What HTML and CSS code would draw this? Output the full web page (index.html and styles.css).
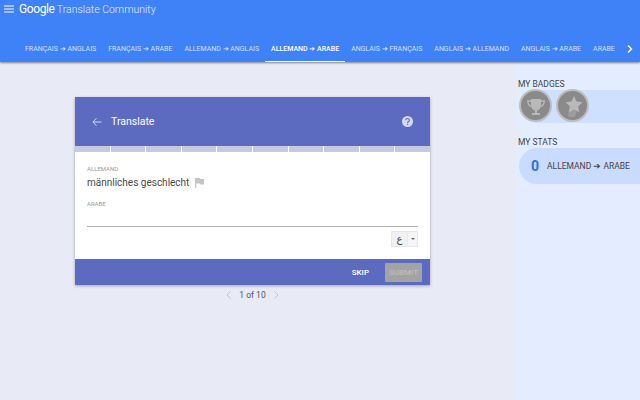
FILE: index.html
```html
<!DOCTYPE html>
<html lang="en">

<head>
    <meta charset="UTF-8">
    <meta name="viewport" content="width=device-width, initial-scale=1.0">
    <title>Google Translate Community</title>
    <link rel="stylesheet" href="styles.css">
</head>

<body>
    <header class="topbar">
        <div class="brand-row">
            <svg class="menu-icon" width="10" height="8" viewBox="0 0 10 8">
                <path d="M0 .5h10v1H0zM0 3.500h10v1H0zM0 6.500h10v1H0z" fill="#ffffff" />
            </svg>
            <span class="brand"><span class="brand-google">Google</span> Translate Community</span>
        </div>
        <nav class="tabs">
            <div class="tab-list">
                <a class="tab">FRANÇAIS ➔ ANGLAIS</a>
                <a class="tab">FRANÇAIS ➔ ARABE</a>
                <a class="tab">ALLEMAND ➔ ANGLAIS</a>
                <a class="tab active">ALLEMAND ➔ ARABE</a>
                <a class="tab">ANGLAIS ➔ FRANÇAIS</a>
                <a class="tab">ANGLAIS ➔ ALLEMAND</a>
                <a class="tab">ANGLAIS ➔ ARABE</a>
                <a class="tab">ARABE</a>
            </div>
            <svg class="tab-next" width="6" height="8" viewBox="0 0 6 8">
                <path d="M1 .5 4.500 4 1 7.500" fill="none" stroke="#ffffff" stroke-width="1.500" />
            </svg>
        </nav>
    </header>

    <div class="page">
        <main class="main">
            <section class="card">
                <div class="card-head">
                    <div class="card-title">
                        <svg width="10" height="10" viewBox="0 0 10 10">
                            <path d="M9.500 5H1M4.500 1.200.9 5l3.600 3.800" fill="none" stroke="#d5d9f2" stroke-width="1" />
                        </svg>
                        <span>Translate</span>
                    </div>
                    <svg width="11" height="11" viewBox="0 0 11 11">
                        <circle cx="5.500" cy="5.500" r="5.500" fill="#d5d9f2" />
                        <path d="M3.700 4.300c0-2.300 3.700-2.300 3.700-.1 0 1.300-1.800 1.400-1.800 2.700" fill="none" stroke="#5c6bc0" stroke-width="1.100" />
                        <rect x="5" y="7.700" width="1.200" height="1.200" fill="#5c6bc0" />
                    </svg>
                </div>
                <div class="progress">
                    <i></i><i></i><i></i><i></i><i></i><i></i><i></i><i></i><i></i><i></i>
                </div>
                <div class="card-body">
                    <div class="field-label">ALLEMAND</div>
                    <div class="source">
                        <span>männliches geschlecht</span>
                        <svg width="9" height="10" viewBox="0 0 9 10">
                            <path d="M0 0h5l.4 1H9v5.500H5.500L5 5.500H1.200V10H0z" fill="#c4c4c4" />
                        </svg>
                    </div>
                    <div class="field-label target-label">ARABE</div>
                    <div class="answer-line"></div>
                    <div class="keyboard">
                        <span class="key-main">ع</span>
                        <span class="key-drop"></span>
                    </div>
                </div>
                <div class="card-foot">
                    <span class="skip">SKIP</span>
                    <span class="submit">SUBMIT</span>
                </div>
            </section>
            <div class="pager">
                <svg width="5" height="8" viewBox="0 0 5 8">
                    <path d="M4.500.5 1 4l3.500 3.500" fill="none" stroke="#c2c5cf" stroke-width="1" />
                </svg>
                <span>1 of 10</span>
                <svg width="5" height="8" viewBox="0 0 5 8">
                    <path d="M.5.5 4 4 .5 7.500" fill="none" stroke="#c2c5cf" stroke-width="1" />
                </svg>
            </div>
        </main>

        <aside class="side">
            <h2 class="side-title">MY BADGES</h2>
            <div class="badges">
                <div class="badge">
                    <svg width="26" height="26" viewBox="0 0 26 26">
                        <path d="M8 6h10v6c0 3-2 5-4 5.500V20h3v2H9v-2h3v-2.500C10 17 8 15 8 12z" fill="#b9b9b9" />
                        <path d="M8 8H4.800c0 3 1 5 3.700 5.500M18 8h3.200c0 3-1 5-3.700 5.500" fill="none" stroke="#b9b9b9" stroke-width="1.300" />
                    </svg>
                </div>
                <div class="badge">
                    <svg width="26" height="26" viewBox="0 0 26 26">
                        <path d="M9 15l-1 9h7l2-7z" fill="#9c9c9c" />
                        <path d="M14 3l2.500 5.500 6 .8-4.400 4.100 1.100 5.900-5.200-2.900-5.200 2.900 1.100-5.900-4.400-4.100 6-.8z" fill="#b9b9b9" />
                    </svg>
                </div>
            </div>
            <h2 class="side-title stats-title">MY STATS</h2>
            <div class="stat">
                <span class="stat-num">0</span>
                <span class="stat-name">ALLEMAND ➔ ARABE</span>
            </div>
        </aside>
    </div>
</body>

</html>
```
FILE: styles.css
```css
* {
    box-sizing: border-box;
}

body {
    margin: 0;
    height: 400px;
    overflow: hidden;
    background-color: #e8eaf6;
    font-family: "Roboto", "Liberation Sans", sans-serif;
    color: #444444;
}

.topbar {
    height: 62px;
    background-color: #3f81f7;
    box-shadow: 0 1px 2px rgba(0, 0, 0, 0.45);
    position: relative;
    display: flex;
    flex-direction: column;
    justify-content: space-between;
}

.brand-row {
    display: flex;
    align-items: center;
    height: 18px;
    padding-left: 4px;
    gap: 5px;
}

.brand {
    color: #e4edfd;
    font-size: 10.500px;
    font-weight: 300;
    white-space: nowrap;
}

.brand-google {
    color: #ffffff;
    font-size: 12px;
    font-weight: 400;
    letter-spacing: -0.4px;
}

.tabs {
    display: flex;
    align-items: center;
    height: 36px;
    padding-left: 19px;
}

.tab-list {
    display: flex;
    width: 599px;
    height: 36px;
    overflow: hidden;
}

.tab {
    flex: none;
    display: flex;
    align-items: center;
    height: 36px;
    padding: 10px 6px 0;
    color: #cfe0fd;
    font-size: 7px;
    white-space: nowrap;
}

.tab.active {
    color: #ffffff;
    font-weight: 500;
    border-bottom: 1px solid #ffffff;
}

.tab-next {
    margin-left: 9px;
    margin-top: 10px;
}

.page {
    display: flex;
    height: 338px;
}

.main {
    width: 516px;
    padding: 35px 0 0 75px;
}

.card {
    width: 355px;
    background-color: #ffffff;
    box-shadow: 0 1px 3px rgba(0, 0, 0, 0.3);
}

.card-head {
    height: 49px;
    background-color: #5c6bc0;
    display: flex;
    align-items: center;
    justify-content: space-between;
    padding: 0 17px 0 17px;
}

.card-title {
    display: flex;
    align-items: center;
    gap: 9px;
    color: #ffffff;
    font-size: 10.500px;
}

.progress {
    display: flex;
    gap: 1px;
    height: 6px;
    background-color: #ffffff;
}

.progress i {
    flex: 1;
    background-color: #c5cae0;
}

.card-body {
    height: 107px;
    padding: 13px 12px 0 12px;
}

.field-label {
    font-size: 6px;
    color: #9a9a9a;
}

.source {
    display: flex;
    align-items: center;
    gap: 6px;
    margin-top: 5px;
    font-size: 10px;
    color: #4a4a4a;
}

.target-label {
    margin-top: 12px;
}

.answer-line {
    margin-top: 19px;
    border-bottom: 1px solid #b0b0b0;
}

.keyboard {
    display: flex;
    justify-content: flex-end;
    margin-top: 4px;
    height: 16px;
    font-size: 10px;
}

.key-main {
    width: 17px;
    background-color: #f1f1f1;
    border: 1px solid #e8e8e8;
    text-align: center;
    line-height: 13px;
    font-family: "DejaVu Sans", sans-serif;
}

.key-drop {
    width: 10px;
    background-color: #f5f5f5;
    border: 1px solid #e8e8e8;
    border-left: none;
    position: relative;
}

.key-drop::after {
    content: "";
    position: absolute;
    left: 3px;
    top: 6px;
    border-left: 2px solid transparent;
    border-right: 2px solid transparent;
    border-top: 2px solid #666666;
}

.card-foot {
    height: 26px;
    background-color: #5c6bc0;
    display: flex;
    align-items: center;
    justify-content: flex-end;
    padding-right: 8px;
    gap: 16px;
    font-size: 8px;
    font-weight: 500;
}

.skip {
    color: #ffffff;
}

.submit {
    width: 37px;
    height: 19px;
    background-color: #a3a3a3;
    color: #bdbdbd;
    display: flex;
    align-items: center;
    justify-content: center;
    border-radius: 1px;
}

.pager {
    width: 355px;
    display: flex;
    align-items: center;
    justify-content: center;
    gap: 8px;
    margin-top: 5px;
    font-size: 8.500px;
    color: #555555;
}

.side {
    flex: 1;
    background-color: #e3edff;
    padding-top: 17px;
}

.side-title {
    margin: 0 0 0 2px;
    font-size: 8.500px;
    font-weight: 400;
    color: #444444;
}

.badges {
    display: flex;
    gap: 4px;
    padding-left: 3px;
    height: 35px;
    background: linear-gradient(#cfe0fe, #cfe0fe) no-repeat 18px 1px / 100% 33px;
}

.badge {
    width: 33px;
    height: 33px;
    border-radius: 50%;
    background-color: #8a8a8a;
    border: 2px solid #bdbdbd;
    display: flex;
    align-items: center;
    justify-content: center;
}

.stats-title {
    margin-top: 13px;
}

.stat {
    display: flex;
    align-items: center;
    height: 36px;
    margin-top: 1px;
    margin-left: 3px;
    padding-left: 12px;
    gap: 8px;
    background-color: #c9dcff;
    border-radius: 18px 0 0 18px;
}

.stat-num {
    color: #2f6fe8;
    font-size: 14px;
    font-weight: 700;
}

.stat-name {
    font-size: 8.500px;
    white-space: nowrap;
    color: #444444;
}
```
